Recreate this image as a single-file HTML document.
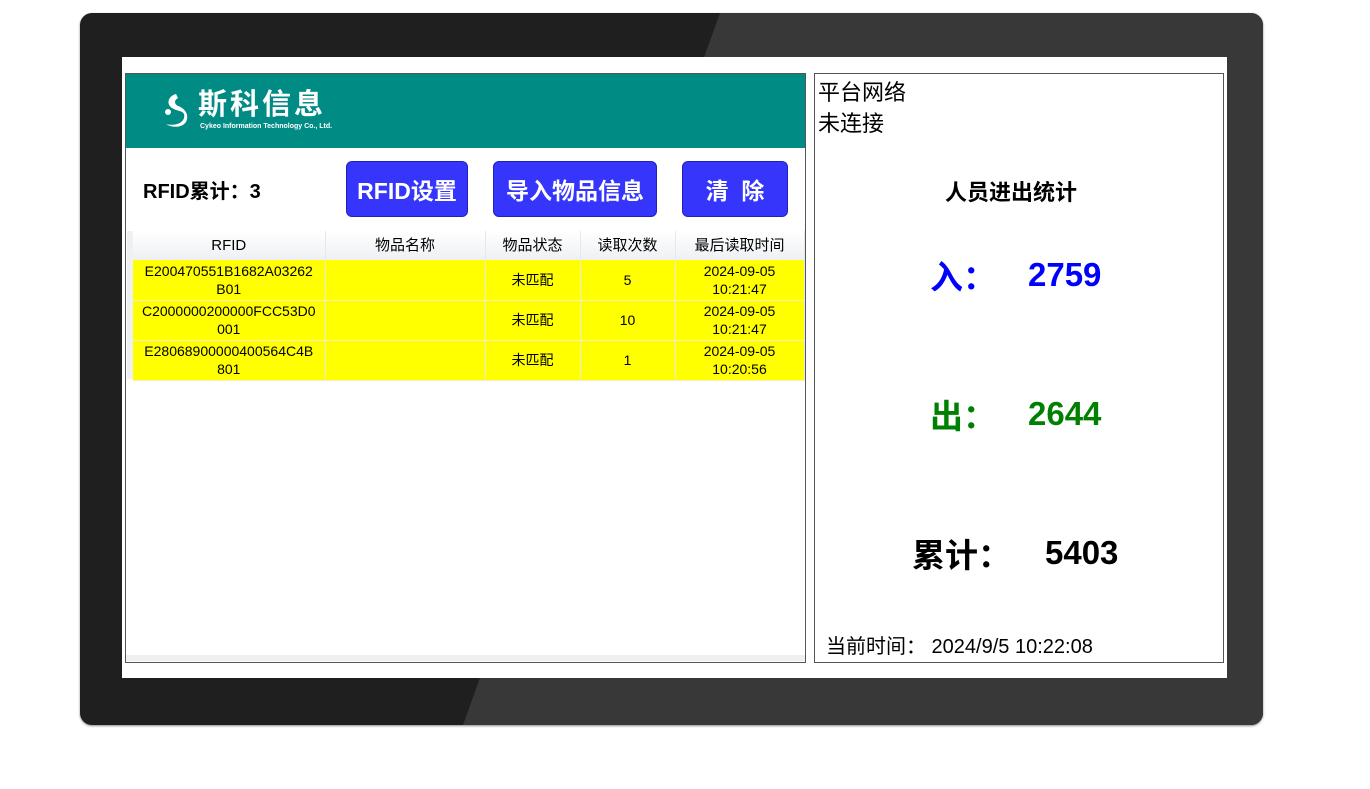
<!DOCTYPE html>
<html><head><meta charset="utf-8"><style>
*{margin:0;padding:0;box-sizing:border-box}
body{width:1370px;height:789px;background:#fff;position:relative;overflow:hidden;font-family:"Liberation Sans","Noto Sans CJK SC",sans-serif}
.cjk{font-family:"Noto Sans CJK SC",sans-serif}
.bezel{position:absolute;left:80px;top:13px;width:1183px;height:712px;border-radius:12px;background:#1f1f1f;overflow:hidden;box-shadow:0 1px 2px #888}
.light{position:absolute;left:0;top:0;width:100%;height:100%;background:#383838;clip-path:polygon(640px 0,1183px 0,1183px 712px,383px 712px)}
.screen{position:absolute;left:122px;top:57px;width:1105px;height:621px;background:#fff}
.abs{position:absolute}
.lp{left:125px;top:73px;width:681px;height:590px;border:1px solid #555}
.hdr{left:126px;top:74px;width:679px;height:74px;background:#008b84}
.btn{position:absolute;background:#3535fb;color:#fff;font-weight:bold;font-size:23px;border-radius:6px;display:flex;align-items:center;justify-content:center;border:1px solid #2020c0}
table{position:absolute;left:133px;top:231px;border-collapse:collapse;font-size:14px}
td,th{border-right:1px solid #e8e8e8;text-align:center;font-weight:normal;line-height:18px;padding:0}
th{height:29px;background:linear-gradient(#fff,#eef0f4);font-size:15px}
td{background:#ff0;height:40px;border-bottom:1px solid #f0f0c0}
.rp{left:814px;top:73px;width:410px;height:590px;border:1px solid #555}
.big{font-size:33px;font-weight:bold;line-height:40px}
</style></head><body>
<div class="bezel"><div class="light"></div></div>
<div class="screen"></div>
<div class="abs lp"></div>
<div class="abs hdr"></div>
<svg class="abs" style="left:162px;top:90px" width="32" height="42" viewBox="0 0 32 42"><path d="M14 4c-8 2-10 10-4 14 6 4 14 2 12 10-2 6-10 8-18 6 6 4 16 4 20-2 4-8-2-14-8-16-4-2-4-6 0-8z" fill="#fff"/><circle cx="6" cy="22" r="3" fill="#fff"/></svg>
<div class="abs" style="left:198px;top:88px;color:#fff;font-size:29px;font-weight:bold;letter-spacing:3px;line-height:34px">斯科信息</div>
<div class="abs" style="left:200px;top:123px;color:#fff;font-size:7px;font-weight:bold">Cykeo Information Technology Co., Ltd.</div>
<div class="abs" style="left:143px;top:177px;font-size:20px;font-weight:bold;line-height:26px">RFID累计<span class="cjk">：</span>3</div>
<div class="btn" style="left:346px;top:161px;width:122px;height:56px">RFID设置</div>
<div class="btn" style="left:493px;top:161px;width:164px;height:56px">导入物品信息</div>
<div class="btn" style="left:682px;top:161px;width:106px;height:56px">清&nbsp;&nbsp;除</div>
<div class="abs" style="left:127px;top:231px;width:6px;height:148px;background:#f0f0f0"></div>
<table>
<tr><th style="width:192px">RFID</th><th style="width:160px">物品名称</th><th style="width:95px">物品状态</th><th style="width:95px">读取次数</th><th style="width:129px">最后读取时间</th></tr>
<tr><td>E200470551B1682A03262<br>B01</td><td></td><td>未匹配</td><td>5</td><td>2024-09-05<br>10:21:47</td></tr>
<tr><td>C2000000200000FCC53D0<br>001</td><td></td><td>未匹配</td><td>10</td><td>2024-09-05<br>10:21:47</td></tr>
<tr><td>E28068900000400564C4B<br>801</td><td></td><td>未匹配</td><td>1</td><td>2024-09-05<br>10:20:56</td></tr>
</table>
<div class="abs" style="left:126px;top:655px;width:679px;height:6px;background:#f0f0f0"></div>
<div class="abs rp"></div>
<div class="abs" style="left:818px;top:77px;font-size:22px;line-height:31px">平台网络<br>未连接</div>
<div class="abs" style="left:945px;top:175px;font-size:22px;font-weight:bold">人员进出统计</div>
<div class="abs big cjk" style="left:930px;top:255px;color:#0000ff">入：</div>
<div class="abs big" style="left:1028px;top:255px;color:#0000ff">2759</div>
<div class="abs big cjk" style="left:930px;top:394px;color:#008000">出：</div>
<div class="abs big" style="left:1028px;top:394px;color:#008000">2644</div>
<div class="abs big cjk" style="left:912px;top:533px">累计：</div>
<div class="abs big" style="left:1045px;top:533px">5403</div>
<div class="abs" style="left:826px;top:630px;font-size:20px">当前时间<span class="cjk">：</span>&nbsp;2024/9/5 10:22:08</div>
</body></html>
